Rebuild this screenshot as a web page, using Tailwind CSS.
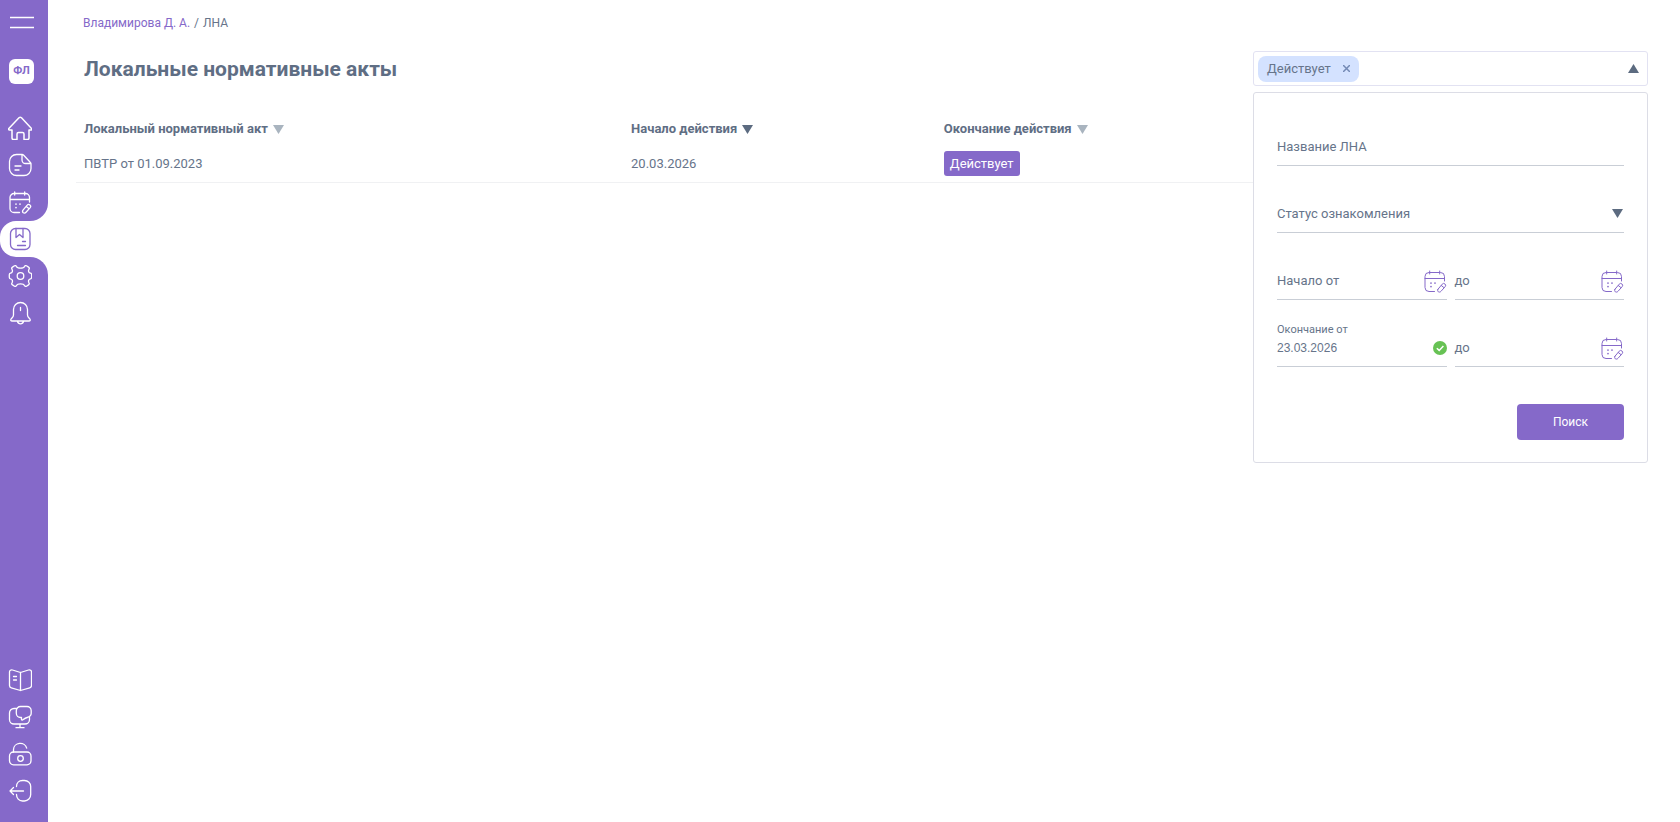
<!DOCTYPE html>
<html lang="ru">
<head>
  <meta charset="UTF-8" />
  <meta name="viewport" content="width=device-width, initial-scale=1.0" />
  <title>Локальные нормативные акты</title>
  <script src="https://cdn.jsdelivr.net/npm/@tailwindcss/browser@4"></script>
</head>
<body class="min-h-screen flex bg-white font-['Roboto',sans-serif] text-[13px] text-[#66748a]">

  <!-- Shared icons -->
  <svg class="hidden">
    <symbol id="i-calendar" viewBox="0 0 24 24">
      <path d="M21.500 12V7.500a4 4 0 0 0-4-4H6a4 4 0 0 0-4 4v11a4 4 0 0 0 4 4h5.500M2 9.500h19.500M6.700 2v3M16.700 2v3" />
      <path d="M8 14v.1M12 14v.1M8 17.500v.1" stroke-width="1.700" />
      <path d="M15 20.200l4.200-5a1.900 1.900 0 0 1 3 2.400l-4.200 4.700c-.8.900-1.800 1-2.700.5-.8-.7-.9-1.800-.3-2.600zM18.300 16.500l2.500 2" />
    </symbol>
    <symbol id="i-down" viewBox="0 0 11 9"><path d="M0 0h11L5.500 9z" /></symbol>
    <symbol id="i-up" viewBox="0 0 11 9"><path d="M0 9h11L5.500 0z" /></symbol>
  </svg>

  <!-- Sidebar -->
  <aside class="w-12 shrink-0 flex flex-col text-white">
    <div class="h-[221px] bg-[#8569c9] rounded-br-[18px]">
      <button class="block mt-[15px] ml-[9px] h-4" aria-label="Меню">
        <svg class="w-[25px] h-4" viewBox="0 0 25 16" fill="none" stroke="currentColor" stroke-width="1.500"><path d="M1 2.500h24M1 12.500h24" /></svg>
      </button>
      <div class="mt-7 ml-[9px] size-[25px] rounded-md bg-white text-[#8569c9] text-[11px] font-bold flex items-center justify-center">ФЛ</div>
      <nav class="mt-[25px] pl-2">
        <a href="#" class="h-[37px] flex items-center" aria-label="Главная">
          <svg class="size-6" viewBox="0 0 24 24" fill="none" stroke="currentColor" stroke-width="1.500" stroke-linejoin="round" stroke-linecap="round"><path d="M.8 12.500 11 1.800a1.800 1.800 0 0 1 2.500 0L23.500 12.500c.6.700.2 1.500-.6 1.500H21v8a1.500 1.500 0 0 1-1.500 1.500H16V18a1.500 1.500 0 0 0-1.500-1.500h-4A1.500 1.500 0 0 0 9 18v5.500H5.500A1.500 1.500 0 0 1 4 22v-8H1.400c-.9 0-1.200-.8-.6-1.500z" /></svg>
        </a>
        <a href="#" class="h-[37px] flex items-center" aria-label="Документы">
          <svg class="size-6" viewBox="0 0 24 24" fill="none" stroke="currentColor" stroke-width="1.300" stroke-linejoin="round" stroke-linecap="round"><path d="M14 1.500H8.500A7 7 0 0 0 1.500 8.500v7a7 7 0 0 0 7 7h7.500a7 7 0 0 0 7-7V11c0-.7-.3-1.300-.8-1.800l-6.500-7c-.5-.5-1-.7-1.700-.7zM14 1.500V7a3.500 3.500 0 0 0 3.500 3.500H23M7 13h6M7 17h4" /></svg>
        </a>
        <a href="#" class="h-[37px] flex items-center" aria-label="Календарь">
          <svg class="size-6" fill="none" stroke="currentColor" stroke-width="1.300" stroke-linejoin="round" stroke-linecap="round"><use href="#i-calendar" /></svg>
        </a>
      </nav>
    </div>

    <!-- Active item -->
    <div class="bg-linear-to-r from-[#8569c9] from-50% to-white to-50%">
      <a href="#" class="h-9 pl-2 flex items-center rounded-l-2xl bg-white text-[#8569c9]" aria-label="ЛНА">
        <svg class="size-6" viewBox="0 0 24 24" fill="none" stroke="currentColor" stroke-width="1.300" stroke-linejoin="round" stroke-linecap="round"><rect x="2.500" y="1.500" width="19.500" height="21" rx="5" /><path d="M8 1.500v9l3.500-3 3.500 3v-9M14.500 14.500h3M9.500 18.500h8" /></svg>
      </a>
    </div>

    <div class="flex-1 flex flex-col bg-[#8569c9] rounded-tr-[18px] pl-2">
      <a href="#" class="h-[37px] flex items-center" aria-label="Настройки">
        <svg class="size-6" viewBox="0 0 24 24" fill="none" stroke="currentColor" stroke-width="1.300" stroke-linejoin="round"><circle cx="12.500" cy="12" r="3.300" /><path d="M16.500 2.500c.4-1 1.200-1.200 2-.7l2 1.300c.8.500 1 1.300.5 2.100-1 1.900-.3 3.600 1.500 4 .8.200 1.200.7 1.200 1.500v2.600c0 .8-.4 1.300-1.200 1.500-1.800.4-2.500 2.100-1.500 4 .5.800.3 1.600-.5 2.100l-2 1.300c-.8.500-1.600.3-2-.7-1-2.200-7-2.200-8 0-.4 1-1.200 1.200-2 .7l-2-1.300c-.8-.5-1-1.300-.5-2.100 1-1.900.3-3.600-1.500-4-.8-.2-1.200-.7-1.200-1.500v-2.600c0-.8.400-1.300 1.200-1.500 1.800-.4 2.500-2.100 1.500-4-.5-.8-.3-1.600.5-2.100l2-1.300c.8-.5 1.600-.3 2 .7 1 2.200 7 2.200 8 0z" /></svg>
      </a>
      <a href="#" class="h-[37px] flex items-center" aria-label="Уведомления">
        <svg class="size-6" viewBox="0 0 24 24" fill="none" stroke="currentColor" stroke-width="1.300" stroke-linejoin="round" stroke-linecap="round"><path d="M5.500 14V8.500a7 7 0 0 1 14 0V14c0 1.200.5 2 1.500 3l.8.800c1 1.200.4 2.200-1 2.200H4.200c-1.400 0-2-1-1-2.200L4 17c1-1 1.500-1.800 1.500-3zM9.500 20.500c.4 1.500 1.500 2.300 3 2.300s2.600-.8 3-2.300M12.500 6.500v3" /></svg>
      </a>
      <div class="mt-auto pb-[13px]">
        <a href="#" class="h-[37px] flex items-center" aria-label="Справка">
          <svg class="size-6" viewBox="0 0 24 24" fill="none" stroke="currentColor" stroke-width="1.300" stroke-linejoin="round" stroke-linecap="round"><path d="M12.500 4.500 4.500 2C2.800 1.500 1.500 2.300 1.500 4v13.500c0 1.300.6 2 1.800 2.300l9.200 2.700 9.200-2.700c1.200-.3 1.800-1 1.800-2.300V4c0-1.700-1.300-2.500-3-2zM12.500 4.500v18M5.500 8.500h3M5.500 12h3" /></svg>
        </a>
        <a href="#" class="h-[37px] flex items-center" aria-label="Поддержка">
          <svg class="size-6" viewBox="0 0 24 24" fill="none" stroke="currentColor" stroke-width="1.300" stroke-linejoin="round" stroke-linecap="round"><path d="M8.500 3.500H6A4.500 4.500 0 0 0 1.500 8v6.500A4.500 4.500 0 0 0 6 19h11a4.500 4.500 0 0 0 4.500-4.500V12.500M12 19v3.500M8 22.700h8" /><path d="M12.500 1.500h6.500A4.200 4.200 0 0 1 23.200 5.700v2.600c0 2.500-2 3.700-4 4.200-1.500.4-3.200 1.500-4.700 2.500-.5.300-1 0-1-.5V12.500h-1a4.200 4.200 0 0 1-4.200-4.200V5.700a4.200 4.200 0 0 1 4.200-4.200z" /></svg>
        </a>
        <a href="#" class="h-[37px] flex items-center" aria-label="Доступ">
          <svg class="size-6" viewBox="0 0 24 24" fill="none" stroke="currentColor" stroke-width="1.300" stroke-linejoin="round" stroke-linecap="round"><rect x="1.500" y="10" width="21.500" height="12.800" rx="4" /><circle cx="12.500" cy="16.500" r="2.800" /><path d="M5.500 10V7.500a6.700 6.300 0 0 1 13.200-1.300" /></svg>
        </a>
        <a href="#" class="h-[37px] flex items-center" aria-label="Выход">
          <svg class="size-6" viewBox="0 0 24 24" fill="none" stroke="currentColor" stroke-width="1.300" stroke-linejoin="round" stroke-linecap="round"><path d="M8.500 7.500c0-3.700 2.500-6 6-6h2c3.500 0 6.200 2.500 6.200 6v8c0 3.500-2.700 6.500-6.200 6.500h-2c-3.500 0-6-2.800-6-6.500M15.500 12H2M5.500 8.500 2 12l3.500 3.500" /></svg>
        </a>
      </div>
    </div>
  </aside>

  <main class="flex-1 min-w-0 pl-7 pr-8">
    <nav class="pl-[7px] pt-[15px] flex gap-1 text-xs leading-4">
      <a href="#" class="text-[#8569c9]">Владимирова Д. А.</a>
      <span>/</span>
      <span>ЛНА</span>
    </nav>

    <div class="mt-5 flex items-center justify-between">
      <h1 class="pl-2 text-[21px] leading-8 font-bold text-[#5f6e84]">Локальные нормативные акты</h1>

      <!-- Filter -->
      <div class="relative w-[395px]">
        <div class="h-[35px] pl-1 pr-2 flex items-center justify-between border border-[#e2e2f2] rounded-[3px]">
          <span class="h-[26px] px-[9px] flex items-center gap-3 rounded-lg bg-[#d4e2ff]">
            Действует
            <button aria-label="Убрать" class="text-[#7389b5]">
              <svg class="size-[7px]" viewBox="0 0 7 7" stroke="currentColor" stroke-width="1.500"><path d="M0 0l7 7M7 0 0 7" /></svg>
            </button>
          </span>
          <button aria-label="Свернуть фильтр"><svg class="w-[11px] h-[9px] fill-[#5c6b80]"><use href="#i-up" /></svg></button>
        </div>

        <form class="absolute top-full inset-x-0 mt-1.5 px-[23px] pt-[29px] pb-[22px] bg-white border border-[#dcdde6] rounded-[3px]">
          <div class="grid grid-cols-2 gap-x-2 gap-y-[23px]">
            <div class="col-span-2 h-11 pb-1.5 flex items-end border-b border-[#c9ced6]">
              <label for="name" class="leading-6">Название ЛНА</label>
              <input id="name" type="text" class="flex-1 min-w-0 h-6 pl-2 outline-none" />
            </div>
            <div class="col-span-2 h-11 pb-1.5 pr-px flex items-end border-b border-[#c9ced6]">
              <select aria-label="Статус ознакомления" class="flex-1 h-6 appearance-none outline-none">
                <option>Статус ознакомления</option>
                <option>Ознакомлен</option>
                <option>Не ознакомлен</option>
              </select>
              <svg class="w-[11px] h-[9px] mb-2 fill-[#5c6b80] pointer-events-none"><use href="#i-down" /></svg>
            </div>
            <div class="h-11 pb-1.5 flex items-end border-b border-[#c9ced6]">
              <label for="start-from" class="leading-6">Начало от</label>
              <input id="start-from" type="text" class="flex-1 min-w-0 h-6 pl-2 outline-none" />
              <svg class="size-6 text-[#8569c9]" fill="none" stroke="currentColor" stroke-linejoin="round" stroke-linecap="round"><use href="#i-calendar" /></svg>
            </div>
            <div class="h-11 pb-1.5 flex items-end border-b border-[#c9ced6]">
              <label for="start-to" class="leading-6">до</label>
              <input id="start-to" type="text" class="flex-1 min-w-0 h-6 pl-2 outline-none" />
              <svg class="size-6 text-[#8569c9]" fill="none" stroke="currentColor" stroke-linejoin="round" stroke-linecap="round"><use href="#i-calendar" /></svg>
            </div>
            <div class="h-11 pb-1.5 flex flex-col justify-end border-b border-[#c9ced6]">
              <label for="end-from" class="text-[11px] leading-3">Окончание от</label>
              <div class="flex items-center">
                <input id="end-from" type="text" value="23.03.2026" class="flex-1 min-w-0 h-6 font-['Liberation_Sans',sans-serif] text-xs outline-none" />
                <svg class="size-3.5" viewBox="0 0 14 14" fill="none"><circle cx="7" cy="7" r="7" fill="#67c254" /><path d="M3.800 7.200 6.200 9.400l4.200-4.300" stroke="#fff" stroke-width="1.500" /></svg>
              </div>
            </div>
            <div class="h-11 pb-1.5 flex items-end border-b border-[#c9ced6]">
              <label for="end-to" class="leading-6">до</label>
              <input id="end-to" type="text" class="flex-1 min-w-0 h-6 pl-2 outline-none" />
              <svg class="size-6 text-[#8569c9]" fill="none" stroke="currentColor" stroke-linejoin="round" stroke-linecap="round"><use href="#i-calendar" /></svg>
            </div>
          </div>
          <button type="submit" class="block ml-auto mt-[37px] w-[107px] h-9 rounded bg-[#8569c9] text-xs text-white">Поиск</button>
        </form>
      </div>
    </div>

    <table class="mt-[27px] w-full table-fixed text-left">
      <thead class="text-[#5f6e84]">
        <tr class="h-8">
          <th class="w-[34.8%] px-2"><span class="flex items-center gap-[5px]">Локальный нормативный акт <svg class="w-[11px] h-[9px] fill-[#a9b4bf]"><use href="#i-down" /></svg></span></th>
          <th class="w-[19.9%] px-2"><span class="flex items-center gap-[5px]">Начало действия <svg class="w-[11px] h-[9px] fill-[#5c6b80]"><use href="#i-down" /></svg></span></th>
          <th class="px-2"><span class="flex items-center gap-[5px]">Окончание действия <svg class="w-[11px] h-[9px] fill-[#a9b4bf]"><use href="#i-down" /></svg></span></th>
        </tr>
      </thead>
      <tbody>
        <tr class="h-[37px] border-b border-[#f0f1f3]">
          <td class="px-2">ПВТР от 01.09.2023</td>
          <td class="px-2">20.03.2026</td>
          <td class="px-2"><span class="inline-flex items-center h-[25px] px-1.5 rounded-[3px] bg-[#8569c9] text-white">Действует</span></td>
        </tr>
      </tbody>
    </table>
  </main>

</body>
</html>
